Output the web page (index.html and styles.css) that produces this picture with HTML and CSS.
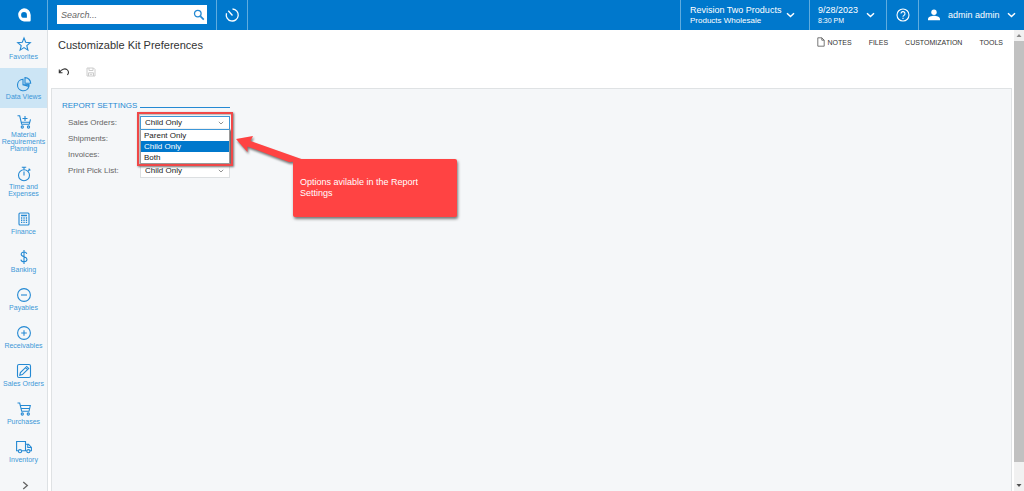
FILE: index.html
```html
<!DOCTYPE html>
<html lang="en">
<head>
<meta charset="utf-8">
<title>Customizable Kit Preferences</title>
<link rel="stylesheet" href="styles.css">
</head>
<body>
<header class="topbar">
  <a class="logo" href="#" aria-label="Home"><svg width="16" height="16" viewBox="0 0 16 16"><path fill="#fff" fill-rule="evenodd" d="M8 1.3a6.7 6.7 0 0 1 6.7 6.7v5.2a1.2 1.2 0 0 1-1.2 1.2H8A6.6 6.6 0 0 1 8 1.3zM8 5a2.9 2.9 0 1 0 0 5.800h2.900V8A2.900 2.900 0 0 0 8 5z"/></svg></a>
  <form class="search">
    <input type="search" placeholder="Search..." aria-label="Search">
    <button type="button" class="search-btn" aria-label="Find"><svg width="12" height="12" viewBox="0 0 12 12" fill="none" stroke="#2489d3"><circle cx="4.8" cy="4.6" r="3.3" stroke-width="1.3"/><path d="M7.300 7.100 10.800 10.600" stroke-width="1.700"/></svg></button>
  </form>
  <button type="button" class="cell recent" aria-label="Recent"><svg width="16" height="16" viewBox="0 0 16 16" fill="none" stroke="#fff" stroke-width="1.300"><path d="M8.500 2a6 6 0 1 1-6 4.300M8.500 8.500 4.300 3.800"/></svg></button>
  <span class="spacer"></span>
  <button type="button" class="cell company"><span class="lines"><span class="big">Revision Two Products</span><span class="small">Products Wholesale</span></span><svg class="chev" width="9" height="6" viewBox="0 0 9 6"><path d="M1 1.2 4.5 4.5 8 1.2"/></svg></button>
  <button type="button" class="cell date"><span class="lines"><span class="big">9/28/2023</span><span class="tiny">8:30 PM</span></span><svg class="chev" width="9" height="6" viewBox="0 0 9 6"><path d="M1 1.2 4.5 4.5 8 1.2"/></svg></button>
  <button type="button" class="cell help" aria-label="Help"><svg width="14" height="14" viewBox="0 0 14 14" fill="none" stroke="#fff" stroke-width="1.1"><circle cx="7" cy="7" r="6"/><path d="M5 5.6a2 2 0 1 1 2.9 1.8Q7 7.8 7 8.7M7 9.8v1.2"/></svg></button>
  <button type="button" class="cell user"><svg width="14" height="12" viewBox="0 0 14 12" fill="#fff"><circle cx="7" cy="3.2" r="2.7"/><path d="M1 11.3V10c0-2.2 3.6-3.3 6-3.3s6 1.1 6 3.3v1.3z"/></svg><span class="big name">admin admin</span><svg class="chev" width="9" height="6" viewBox="0 0 9 6"><path d="M1 1.2 4.5 4.5 8 1.2"/></svg></button>
</header>
<div class="body">
  <nav class="sidebar">
    <a href="#"><svg viewBox="0 0 16 16"><path d="M8 2l1.7 4.3 4.6.3-3.5 3 1.1 4.5L8 11.6l-3.9 2.5 1.1-4.5-3.5-3 4.6-.3z"/></svg>Favorites</a>
    <a href="#" class="active"><svg viewBox="0 0 16 16"><path d="M7 3.200a5.800 5.800 0 1 0 5.900 7.300L7 8.800zM9 1.600v5.600h5.700A5.700 5.700 0 0 0 9 1.600zM7 8.800l6-.3v2"/></svg>Data Views</a>
    <a href="#"><svg viewBox="0 0 16 16"><path d="M1.5 1.8h2.2l2 8.5h7.5l1.3-5M5 8.2h8.7M9 2v5M6.5 4.5h5"/><circle cx="6.3" cy="13" r="1.1"/><circle cx="12.5" cy="13" r="1.1"/></svg>Material Requirements Planning</a>
    <a href="#"><svg viewBox="0 0 16 16"><circle cx="8" cy="9.2" r="5.5"/><path d="M8 5.5v4M8 3.5V1.3M5.8 1.3h4.4M12.2 5l1.4-1.5M12.7 2.7l1.7 1.7"/></svg>Time and Expenses</a>
    <a href="#"><svg viewBox="0 0 16 16"><rect x="3" y="2" width="10" height="12" rx="1"/><path d="M5 4.5h6M5 7h1.3M7.4 7h1.3M9.8 7h1.3M5 9.2h1.3M7.4 9.2h1.3M9.8 9.2h1.3M5 11.4h1.3M7.4 11.4h1.3M9.8 11.4h1.3" stroke-width="1.4"/></svg>Finance</a>
    <a href="#"><svg viewBox="0 0 16 16"><path d="M8 1v14M10.800 4.800C10.400 3.600 9.300 3 8 3 6.400 3 5.200 4 5.200 5.300c0 3.200 5.800 1.900 5.800 5 0 1.500-1.300 2.500-3 2.500-1.600 0-2.800-.8-3.100-2.200"/></svg>Banking</a>
    <a href="#"><svg viewBox="0 0 16 16"><circle cx="8" cy="8" r="6.400"/><path d="M5 8h6"/></svg>Payables</a>
    <a href="#"><svg viewBox="0 0 16 16"><circle cx="8" cy="8" r="6.400"/><path d="M5.200 8h5.600M8 5.200v5.600"/></svg>Receivables</a>
    <a href="#"><svg viewBox="0 0 16 16"><rect x="1.500" y="1.500" width="13" height="13" rx="1.500"/><path d="M3.800 12.200l.6-2.600 6.300-6.200 2 2-6.300 6.200zM9.500 4.600l2 2"/></svg>Sales Orders</a>
    <a href="#"><svg viewBox="0 0 16 16"><path d="M1.500 2h2.200l2 8.300h7.300l1.300-5.800H4.300M5 7.500h8.600"/><circle cx="6.300" cy="13" r="1.100"/><circle cx="12.300" cy="13" r="1.100"/></svg>Purchases</a>
    <a href="#"><svg viewBox="0 0 16 16"><path d="M2.300 11.800H.6V2.500h8.900v9.300H5.800M9.500 5.200h3l2.900 3.300v3.300h-1.300M9.500 11.800h1.200M11.800 5.500v3h3.400"/><circle cx="4" cy="12.200" r="1.600"/><circle cx="12.400" cy="12.200" r="1.600"/></svg>Inventory</a>
    <button type="button" class="more" aria-label="More"><svg viewBox="0 0 8 8"><path d="M2 .8 5.600 4 2 7.200"/></svg></button>
  </nav>
  <main class="content">
    <div class="title-row">
      <h1>Customizable Kit Preferences</h1>
      <div class="menu">
        <button type="button" class="notes"><svg width="8" height="10" viewBox="0 0 8 10" fill="none" stroke="#555" stroke-width=".8"><path d="M.8.8h4l2.400 2.400v6H.8zM4.800.8v2.400h2.400"/></svg>NOTES</button>
        <button type="button">FILES</button>
        <button type="button">CUSTOMIZATION</button>
        <button type="button">TOOLS</button>
      </div>
    </div>
    <div class="toolbar">
      <button type="button" aria-label="Undo"><svg width="12" height="10" viewBox="0 0 12 10" fill="none" stroke="#333" stroke-width="1.100"><path d="M1.500 5.500C3.500 2 7 1.200 9 2.600c1.800 1.300 1.800 3.400.4 5.400M1.300 2.600v3.100h3.200"/></svg></button>
      <button type="button" aria-label="Save" disabled><svg width="10" height="10" viewBox="0 0 10 10" fill="none" stroke="#ccc"><path d="M1 1h6.500L9 2.500V9H1zM3 1v2.500h4V1M2.500 9V5.800h5V9M3.800 7.300h2.400"/></svg></button>
    </div>
    <section class="panel">
      <form class="settings">
        <h2>REPORT SETTINGS</h2>
        <div class="row">
          <label for="sales">Sales Orders:</label>
          <div class="field open">
            <select id="sales"><option>Child Only</option></select>
            <svg class="caret" viewBox="0 0 6 4"><path d="M.8.8 3 3 5.200.8"/></svg>
            <ul class="options" role="listbox" aria-label="Sales Orders">
              <li role="option">Parent Only</li>
              <li role="option" aria-selected="true">Child Only</li>
              <li role="option">Both</li>
            </ul>
            <div class="frame"></div>
          </div>
        </div>
        <div class="row"><label for="ship">Shipments:</label><div class="field"><select id="ship"><option></option></select></div></div>
        <div class="row"><label for="inv">Invoices:</label><div class="field"><select id="inv"><option></option></select></div></div>
        <div class="row"><label for="pick">Print Pick List:</label><div class="field"><select id="pick"><option>Child Only</option></select><svg class="caret" viewBox="0 0 6 4"><path d="M.8.8 3 3 5.200.8"/></svg></div></div>
      </form>
      <svg class="arrow" width="80" height="32" viewBox="0 0 80 32"><path fill="#ff4343" d="M1 4 18 1 15.500 6 72 26 54 27 12.500 11.500 12.500 17z"/></svg>
      <p class="callout">Options avilable in the Report Settings</p>
    </section>
  </main>
  <div class="scrollbar" aria-hidden="true">
    <svg viewBox="0 0 10 11"><path fill="#8a8a8a" d="M2.500 7 5 4l2.500 3z"/></svg>
    <div class="thumb"></div>
    <svg class="down" viewBox="0 0 10 11"><path fill="#505050" d="M2.500 4 5 7l2.500-3z"/></svg>
  </div>
</div>
</body>
</html>
```
FILE: styles.css
```css
* { box-sizing: border-box; }
body {
  margin: 0;
  height: 100vh;
  display: flex;
  flex-direction: column;
  overflow: hidden;
  background: #fff;
  color: #333;
  font-family: "Liberation Sans", Arial, sans-serif;
  font-size: 8px;
}
button, input, select { font: inherit; color: inherit; }
button { border: 0; padding: 0; background: none; }
svg { display: block; flex: none; }

.topbar {
  display: flex;
  flex: none;
  height: 30px;
  background: #0078cc;
  color: #fff;
}
.logo {
  width: 48px;
  border-right: 1px solid #5facdf;
  display: flex;
  align-items: center;
  justify-content: center;
}
.search {
  display: flex;
  align-items: center;
  width: 150px;
  margin: 5px 9px 6px;
  background: #fff;
}
.search input {
  flex: 1;
  min-width: 0;
  border: 0;
  outline: 0;
  padding: 0 4px;
  background: none;
  color: #333;
  font-size: 9px;
  font-style: italic;
}
.search input::placeholder { color: #666; }
.search-btn { width: 14px; }
.cell {
  display: flex;
  align-items: center;
  border-left: 1px solid #5facdf;
  text-align: left;
}
.recent { width: 32px; justify-content: center; border-right: 1px solid #5facdf; }
.spacer { flex: 1; }
.company { width: 129px; padding: 0 14px 0 9px; justify-content: space-between; }
.date { width: 77px; padding: 0 11px 0 8px; justify-content: space-between; }
.help { width: 32px; justify-content: center; }
.user { width: 106px; padding: 0 8px; }
.name { flex: 1; padding-left: 7px; }
.lines { display: flex; flex-direction: column; white-space: nowrap; }
.big { font-size: 9px; line-height: 11px; }
.small { font-size: 8px; line-height: 10px; }
.tiny { font-size: 7px; line-height: 10px; }
.chev { fill: none; stroke: #fff; stroke-width: 1.5; }

.body { flex: 1; display: flex; min-height: 0; }
.sidebar {
  width: 48px;
  flex: none;
  display: flex;
  flex-direction: column;
  overflow: hidden;
  background: #f5f7f9;
  border-right: 1px solid #dde1e4;
}
.sidebar a {
  flex: none;
  display: flex;
  flex-direction: column;
  align-items: center;
  gap: 1px;
  padding: 6px 1px 8px;
  color: #3d97d8;
  font-size: 7px;
  line-height: 7px;
  text-align: center;
  text-decoration: none;
}
.sidebar .active { background: #cce5f5; padding-top: 8px; }
.sidebar a svg {
  width: 16px;
  height: 16px;
  fill: none;
  stroke: #2489d3;
  stroke-width: 1.1;
}
.more { display: flex; justify-content: center; padding: 10px 0 0 4px; }
.more svg { width: 9px; height: 9px; fill: none; stroke: #666; stroke-width: 1.2; }

.content { flex: 1; min-width: 0; display: flex; flex-direction: column; }
.title-row {
  display: flex;
  justify-content: space-between;
  padding: 5px 11px 0 10px;
}
h1 { margin: 3px 0 0; font-size: 11px; line-height: 14px; font-weight: 400; }
.menu { display: flex; gap: 17px; align-items: center; height: 14px; font-size: 7px; }
.notes { display: flex; align-items: center; gap: 3px; }
.toolbar { display: flex; gap: 16px; align-items: center; padding: 3px 10px 0; height: 36px; }

.panel {
  position: relative;
  flex: 1;
  margin: 0 2px 0 3px;
  padding: 12px 10px;
  background: #f5f7f9;
  border: 1px solid #dfe2e4;
  border-bottom: 0;
}
.settings { width: 168px; }
h2 {
  display: flex;
  align-items: center;
  gap: 3px;
  margin: 0 0 5px;
  color: #2489d3;
  font-size: 8px;
  line-height: 10px;
  font-weight: 400;
}
h2::after { content: ""; flex: 1; height: 1px; margin-top: 2px; background: #2489d3; }
.row { display: flex; justify-content: space-between; height: 16px; padding-left: 6px; line-height: 13px; color: #666; }
.field { position: relative; width: 90px; height: 14px; }
.field select {
  display: block;
  width: 100%;
  height: 100%;
  appearance: none;
  border: 1px solid #dcdfe1;
  border-radius: 0;
  background: #fff;
  padding: 0 4px;
  color: #222;
  line-height: 10px;
}
.open select { border-color: #3d97d8; }
.caret { position: absolute; top: 5px; right: 6px; width: 6px; height: 4px; fill: none; stroke: #777; stroke-width: .8; }
.options {
  position: absolute;
  z-index: 1;
  top: 13px;
  left: 0;
  right: 0;
  margin: 0;
  padding: 0;
  list-style: none;
  background: #fff;
  border: 1px solid #999;
  border-top-color: #3d97d8;
  box-shadow: 1px 1px 2px #333;
  color: #222;
  line-height: 11px;
}
.options li { padding-left: 3px; }
.options [aria-selected] { background: #0078cc; color: #fff; }
.frame {
  position: absolute;
  z-index: 2;
  top: -4px;
  left: -3px;
  width: 96px;
  height: 54px;
  border: 2px solid #f04848;
  box-shadow: 1px 1px 2px #777, inset 1px 1px 1px #bbb;
}
.arrow { position: absolute; z-index: 3; top: 46px; left: 183px; filter: drop-shadow(1px 2px 1px #777); }
.callout {
  position: absolute;
  z-index: 4;
  top: 70px;
  left: 241px;
  width: 164px;
  height: 58px;
  margin: 0;
  padding: 18px 7px;
  background: #ff4343;
  border-radius: 2px;
  box-shadow: 1px 2px 3px #777;
  color: #fff;
  font-size: 9px;
  line-height: 11px;
}
.scrollbar { width: 10px; display: flex; flex-direction: column; background: #f1f1f1; }
.scrollbar svg { width: 10px; height: 11px; }
.thumb { flex: 1; margin-bottom: 18px; background: #c1c1c1; }
```
